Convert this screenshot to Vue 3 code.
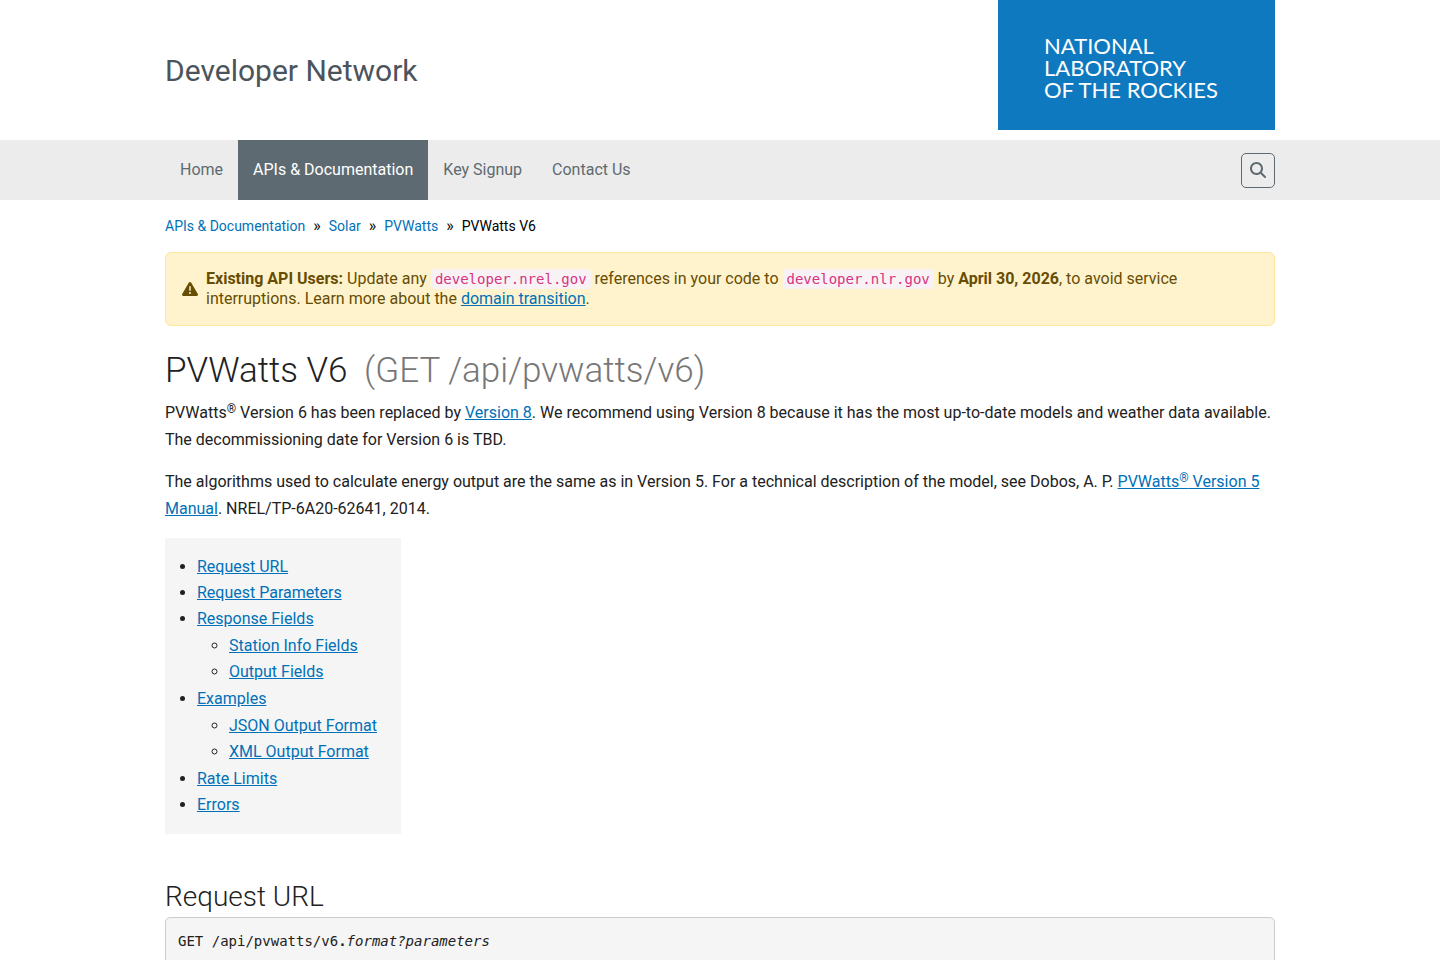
<script setup>
const navItems = [
  { label: 'Home', active: false },
  { label: 'APIs & Documentation', active: true },
  { label: 'Key Signup', active: false },
  { label: 'Contact Us', active: false },
]

const crumbs = ['APIs & Documentation', 'Solar', 'PVWatts']

const contents = [
  { label: 'Request URL', id: 'request-url' },
  { label: 'Request Parameters', id: 'request-parameters' },
  {
    label: 'Response Fields',
    id: 'response-fields',
    children: [
      { label: 'Station Info Fields', id: 'station-info-fields' },
      { label: 'Output Fields', id: 'output-fields' },
    ],
  },
  {
    label: 'Examples',
    id: 'examples',
    children: [
      { label: 'JSON Output Format', id: 'json-output-format' },
      { label: 'XML Output Format', id: 'xml-output-format' },
    ],
  },
  { label: 'Rate Limits', id: 'rate-limits' },
  { label: 'Errors', id: 'errors' },
]
</script>

<template>
  <div class="page">
    <header class="container masthead">
      <a class="site-name" href="#">Developer Network</a>
      <a class="logo" href="#">
        <span>NATIONAL</span>
        <span>LABORATORY</span>
        <span>OF THE ROCKIES</span>
      </a>
    </header>

    <div class="navbar">
      <div class="container navbar-inner">
        <nav aria-label="Main">
          <ul class="nav-list">
            <li v-for="item in navItems" :key="item.label">
              <a href="#" class="nav-link" :class="{ active: item.active }">{{ item.label }}</a>
            </li>
          </ul>
        </nav>
        <button class="search" type="button" aria-label="Search">
          <svg viewBox="0 0 512 512" width="16" height="16" aria-hidden="true">
            <path
              fill="currentColor"
              d="M416 208c0 45.9-14.9 88.3-40 122.7L502.6 457.4c12.5 12.5 12.5 32.8 0 45.3s-32.8 12.5-45.3 0L330.7 376c-34.4 25.2-76.8 40-122.7 40C93.1 416 0 322.9 0 208S93.1 0 208 0S416 93.1 416 208zM208 352a144 144 0 1 0 0-288 144 144 0 1 0 0 288z"
            />
          </svg>
        </button>
      </div>
    </div>

    <main class="container">
      <nav aria-label="Breadcrumb">
        <ol class="breadcrumb">
          <li v-for="crumb in crumbs" :key="crumb">
            <a href="#">{{ crumb }}</a>
          </li>
          <li aria-current="page">PVWatts V6</li>
        </ol>
      </nav>

      <div class="alert" role="alert">
        <svg class="alert-icon" viewBox="0 0 512 512" width="16" height="16" aria-hidden="true">
          <path
            fill="currentColor"
            d="M256 32c14.2 0 27.3 7.5 34.5 19.8l216 368c7.3 12.4 7.3 27.7 .2 40.1S486.3 480 472 480H40c-14.3 0-27.6-7.7-34.7-20.1s-7-27.8 .2-40.1l216-368C228.7 39.5 241.8 32 256 32zm0 128c-13.3 0-24 10.7-24 24V296c0 13.3 10.7 24 24 24s24-10.7 24-24V184c0-13.3-10.7-24-24-24zm32 224a32 32 0 1 0-64 0 32 32 0 1 0 64 0z"
          />
        </svg>
        <p>
          <strong>Existing API Users:</strong> Update any <code>developer.nrel.gov</code> references
          in your code to <code>developer.nlr.gov</code> by <strong>April 30, 2026</strong>, to
          avoid service interruptions. Learn more about the <a href="#">domain transition</a>.
        </p>
      </div>

      <h1>PVWatts V6 <span class="endpoint">(GET /api/pvwatts/v6)</span></h1>

      <p class="copy">
        PVWatts<sup>®</sup> Version 6 has been replaced by <a href="#">Version 8</a>. We recommend
        using Version 8 because it has the most up-to-date models and weather data available. The
        decommissioning date for Version 6 is TBD.
      </p>
      <p class="copy">
        The algorithms used to calculate energy output are the same as in Version 5. For a technical
        description of the model, see Dobos, A. P.
        <a href="#">PVWatts<sup>®</sup> Version 5 Manual</a>. NREL/TP-6A20-62641, 2014.
      </p>

      <nav class="toc" aria-label="Contents">
        <ul>
          <li v-for="entry in contents" :key="entry.id">
            <a :href="'#' + entry.id">{{ entry.label }}</a>
            <ul v-if="entry.children">
              <li v-for="child in entry.children" :key="child.id">
                <a :href="'#' + child.id">{{ child.label }}</a>
              </li>
            </ul>
          </li>
        </ul>
      </nav>

      <h2 id="request-url">Request URL</h2>
      <pre>GET /api/pvwatts/v6<strong>.</strong><em>format?parameters</em></pre>
    </main>
  </div>
</template>

<style>
html {
  overflow-x: hidden;
}
body {
  margin: 0;
  background: #fff;
}
</style>

<style scoped>
.page {
  color: #212121;
  font-family: Roboto, 'Liberation Sans', sans-serif;
  font-size: 16px;
  line-height: 27px;
}

.page * {
  box-sizing: border-box;
}

.container {
  max-width: 1140px;
  margin: 0 auto;
  padding: 0 15px;
}

a {
  color: #0071b8;
}

.masthead {
  display: flex;
  align-items: flex-start;
  justify-content: space-between;
  padding-bottom: 10px;
}

.site-name {
  padding-top: 53px;
  color: #4b545c;
  font-size: 30px;
  line-height: 36px;
  text-decoration: none;
}

.logo {
  display: flex;
  flex-direction: column;
  width: 277px;
  height: 130px;
  padding: 35px 0 0 46px;
  background: #0e79bf;
  color: #fff;
  font-family: Lato, sans-serif;
  font-size: 22px;
  line-height: 22px;
  text-decoration: none;
}

.navbar {
  background: #ececec;
}

.navbar-inner {
  display: flex;
  align-items: center;
  justify-content: space-between;
}

.nav-list {
  display: flex;
  margin: 0;
  padding: 0;
  list-style: none;
}

.nav-link {
  display: block;
  padding: 0 15px;
  color: #5e6a71;
  line-height: 60px;
  text-decoration: none;
}

.nav-link.active {
  background: #5e6a71;
  color: #fff;
}

.search {
  display: flex;
  align-items: center;
  justify-content: center;
  width: 34px;
  height: 35px;
  padding: 0;
  border: 1px solid #5e6a71;
  border-radius: 5px;
  background: transparent;
  color: #5e6a71;
}

.breadcrumb {
  display: flex;
  margin: 0;
  padding: 15px 0;
  color: #000;
  font-size: 14px;
  line-height: 22px;
  list-style: none;
}

.breadcrumb a {
  text-decoration: none;
}

.breadcrumb li + li::before {
  padding: 0 8px;
  font-size: 16px;
  content: '»';
}

.alert {
  display: flex;
  align-items: center;
  gap: 8px;
  padding: 16px;
  border: 1px solid #ffe69c;
  border-radius: 6px;
  background: #fff3cd;
  color: #664d03;
}

.alert-icon {
  flex: none;
}

.alert p {
  margin: 0;
  line-height: 20px;
}

.alert code {
  padding: 2px 4px;
  border-radius: 4px;
  background: #f9f2f4;
  color: #d63384;
  font-family: 'DejaVu Sans Mono', monospace;
  font-size: 14px;
}

h1,
h2 {
  font-weight: 300;
}

h1 {
  margin: 24px 0 7px;
  font-size: 35px;
  line-height: 42px;
}

.endpoint {
  margin-left: 8px;
  color: #777;
}

.copy {
  margin: 0 0 15px;
}

sup {
  position: relative;
  top: -5px;
  font-size: 12px;
  line-height: 0;
  vertical-align: baseline;
}

.toc {
  width: fit-content;
  margin-top: 16px;
  padding: 16px 24px 16px 0;
  background: #f5f5f5;
  line-height: 26px;
}

.toc ul {
  margin: 0;
  padding-left: 32px;
}

.toc ul ul {
  margin: 1px 0;
}

h2 {
  margin: 46px 0 3px;
  font-size: 28px;
  line-height: 34px;
}

pre {
  margin: 0;
  padding: 12px;
  border: 1px solid #ccc;
  border-radius: 5px;
  background: #f5f5f5;
  font-family: 'DejaVu Sans Mono', monospace;
  font-size: 14px;
  line-height: 22px;
}
</style>
